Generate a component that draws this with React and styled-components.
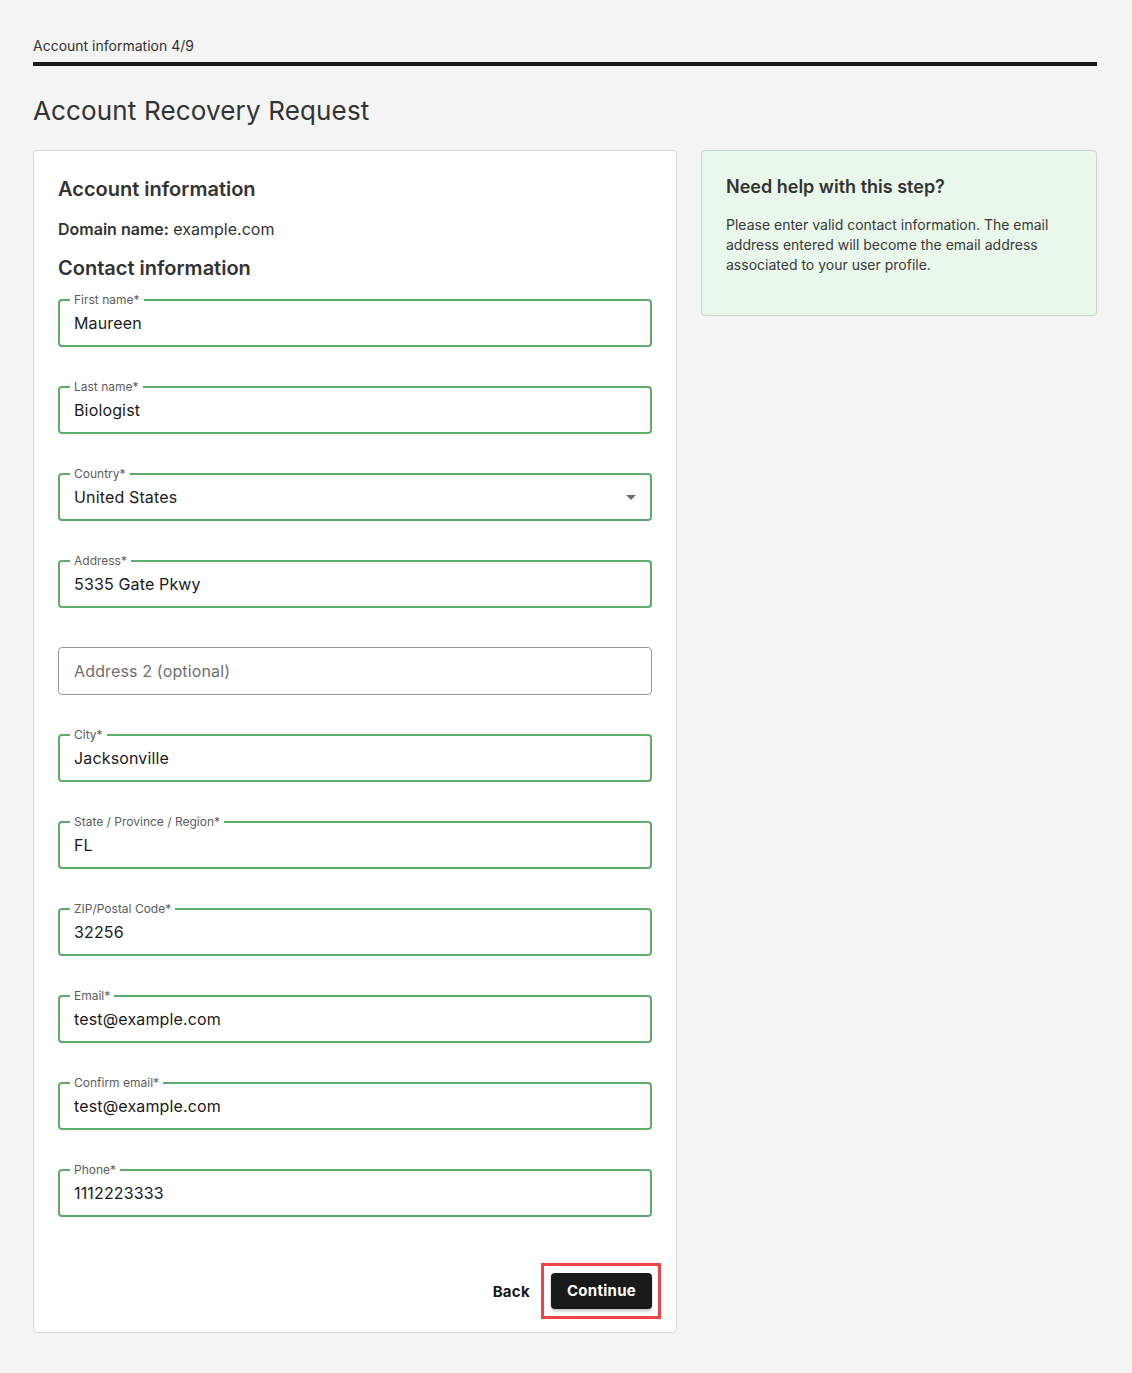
import React from "react";
import styled, { createGlobalStyle } from "styled-components";

const Global = createGlobalStyle`
  html, body { margin: 0; padding: 0; background: #f4f4f4; }
  body { font-family: Inter, "Noto Sans", Arial, sans-serif; color: #333; -webkit-font-smoothing: antialiased; }
  * { box-sizing: border-box; }
`;

const Page = styled.div`
  padding: 36px 35px 41px 33px;
`;

const StepLabel = styled.div`
  font-size: 14px;
  line-height: 20px;
  color: #333;
  padding-bottom: 6px;
  border-bottom: 4px solid #1a1a1a;
`;

const Title = styled.h1`
  margin: 29px 0 23px 0;
  font-size: 26px;
  line-height: 32px;
  font-weight: 400;
  letter-spacing: 0.15px;
  color: #333;
`;

const Columns = styled.div`
  display: grid;
  grid-template-columns: 644px 396px;
  gap: 24px;
  align-items: start;
`;

const Card = styled.div`
  background: #fff;
  border: 1px solid #d6d9dd;
  border-radius: 4px;
  padding: 24px 24px 23px;
`;

const HelpCard = styled.div`
  background: #eaf7eb;
  border: 1px solid #cfd3d0;
  border-radius: 4px;
  padding: 22px 24px 40px;
`;

const Heading = styled.h2`
  margin: 0;
  font-size: ${(p) => (p.$small ? "18px" : "20px")};
  line-height: 28px;
  font-weight: 600;
  color: #333;
`;

const DomainLine = styled.p`
  margin: 16px 0 15px;
  font-size: 16px;
  line-height: 20px;
  color: #333;
  strong { font-weight: 600; }
`;

const HelpText = styled.p`
  margin: 14px 0 0;
  font-size: 14px;
  line-height: 20px;
  color: #3a3a3a;
`;

const Fields = styled.div`
  display: flex;
  flex-direction: column;
  gap: 33px;
  margin-top: 11px;
`;

const FieldSet = styled.fieldset`
  margin: 0;
  min-width: 0;
  border: 2px solid #5dab6d;
  border-radius: 4px;
  padding: 0 10px 6px;
  display: flex;
  align-items: center;
`;

const Legend = styled.legend`
  padding: 0 4px;
  font-size: 12px;
  line-height: 14px;
  color: #5c5c5c;
`;

const Value = styled.div`
  flex: 1;
  height: 32px;
  padding: 0 4px;
  display: flex;
  align-items: center;
  font-size: 16px;
  letter-spacing: 0.15px;
  color: #1a1a1a;
`;

const Caret = styled.span`
  width: 0;
  height: 0;
  margin-right: 4px;
  border-left: 5px solid transparent;
  border-right: 5px solid transparent;
  border-top: 5px solid #6b6b6b;
`;

const EmptyField = styled.div`
  height: 48px;
  margin-top: 6px;
  border: 1px solid #9a9a9a;
  border-radius: 4px;
  padding: 0 15px;
  display: flex;
  align-items: center;
  font-size: 16px;
  letter-spacing: 0.15px;
  color: #6f6f6f;
`;

const Actions = styled.div`
  margin-top: 56px;
  display: flex;
  justify-content: flex-end;
  align-items: center;
  gap: 21px;
`;

const BackButton = styled.button`
  border: none;
  background: none;
  padding: 0;
  font-family: inherit;
  font-size: 15px;
  font-weight: 700;
  color: #1a1a1a;
  letter-spacing: 0.3px;
`;

const PrimaryButton = styled.button`
  position: relative;
  height: 36px;
  width: 101px;
  border: none;
  border-radius: 4px;
  background: #1a1a1a;
  color: #fff;
  font-family: inherit;
  font-size: 15px;
  font-weight: 700;
  letter-spacing: 0.3px;
  padding-bottom: 2px;
  box-shadow: 0 2px 3px rgba(0, 0, 0, 0.25);

  &::after {
    content: "";
    position: absolute;
    inset: -10px -9px -10px -10px;
    border: 3px solid #ef4545;
    pointer-events: none;
  }
`;

const fields = [
  { label: "First name*", value: "Maureen" },
  { label: "Last name*", value: "Biologist" },
  { label: "Country*", value: "United States", select: true },
  { label: "Address*", value: "5335 Gate Pkwy" },
  { placeholder: "Address 2 (optional)" },
  { label: "City*", value: "Jacksonville" },
  { label: "State / Province / Region*", value: "FL" },
  { label: "ZIP/Postal Code*", value: "32256" },
  { label: "Email*", value: "test@example.com" },
  { label: "Confirm email*", value: "test@example.com" },
  { label: "Phone*", value: "1112223333" },
];

export default function App() {
  return (
    <>
      <Global />
      <Page>
        <StepLabel>Account information 4/9</StepLabel>
        <Title>Account Recovery Request</Title>
        <Columns>
          <Card>
            <Heading>Account information</Heading>
            <DomainLine>
              <strong>Domain name:</strong> example.com
            </DomainLine>
            <Heading>Contact information</Heading>
            <Fields>
              {fields.map((f, i) =>
                f.placeholder ? (
                  <EmptyField key={i}>{f.placeholder}</EmptyField>
                ) : (
                  <FieldSet key={i}>
                    <Legend>{f.label}</Legend>
                    <Value>{f.value}</Value>
                    {f.select && <Caret />}
                  </FieldSet>
                )
              )}
            </Fields>
            <Actions>
              <BackButton>Back</BackButton>
              <PrimaryButton>Continue</PrimaryButton>
            </Actions>
          </Card>
          <HelpCard>
            <Heading $small>Need help with this step?</Heading>
            <HelpText>
              Please enter valid contact information. The email address entered will become the email address associated to your user profile.
            </HelpText>
          </HelpCard>
        </Columns>
      </Page>
    </>
  );
}
